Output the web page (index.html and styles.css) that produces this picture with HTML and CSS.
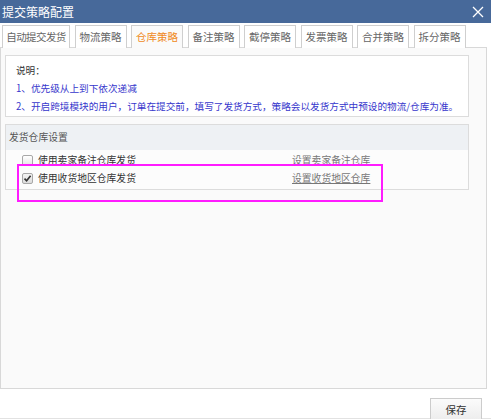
FILE: index.html
```html
<!DOCTYPE html>
<html lang="zh-CN">
<head>
<meta charset="utf-8">
<link rel="stylesheet" href="styles.css">
</head>
<body>
<div class="win">
  <div class="titlebar">
    <span class="title">提交策略配置</span>
    <svg class="close" width="12" height="12" viewBox="0 0 12 12"><path d="M1 1L11 11M11 1L1 11" stroke="#fff" stroke-width="1.3" fill="none"/></svg>
  </div>
  <div class="tabs">
    <div class="tab wide">自动提交发货</div>
    <div class="tab">物流策略</div>
    <div class="tab active">仓库策略</div>
    <div class="tab">备注策略</div>
    <div class="tab">截停策略</div>
    <div class="tab">发票策略</div>
    <div class="tab">合并策略</div>
    <div class="tab">拆分策略</div>
  </div>
  <div class="panel">
    <div class="note">
      <div class="note-title">说明：</div>
      <div class="note-line">1、优先级从上到下依次递减</div>
      <div class="note-line">2、开启跨境模块的用户，订单在提交前，填写了发货方式，策略会以发货方式中预设的物流/仓库为准。</div>
    </div>
    <div class="section">
      <div class="section-head">发货仓库设置</div>
      <div class="rows">
        <div class="row">
          <span class="opt"><span class="cb"></span>使用卖家备注仓库发货</span>
          <a class="link">设置卖家备注仓库</a>
        </div>
        <div class="row">
          <span class="opt"><span class="cb checked"><svg width="9" height="9" viewBox="0 0 9 9"><path d="M1.5 4.6L3.6 6.8L7.6 1.8" stroke="#333" stroke-width="1.6" fill="none"/></svg></span>使用收货地区仓库发货</span>
          <a class="link">设置收货地区仓库</a>
        </div>
      </div>
    </div>
  </div>
  <div class="footer">
    <button class="btn">保存</button>
  </div>
  <div class="highlight"></div>
</div>
</body>
</html>
```

FILE: styles.css
```css
html, body {
  margin: 0;
  padding: 0;
  background: #ffffff;
}
body {
  font-family: "Noto Sans CJK SC", "Liberation Sans", sans-serif;
  font-size: 10px;
  color: #333;
}
.win {
  position: relative;
  width: 491px;
  height: 419px;
  overflow: hidden;
  background: #ffffff;
}
.titlebar {
  height: 23px;
  background: #47699a;
  color: #fff;
  display: flex;
  align-items: center;
  justify-content: space-between;
  padding: 0 7px 0 2px;
}
.title {
  font-size: 12px;
  line-height: 23px;
}
.tabs {
  display: flex;
  gap: 4.5px;
  height: 22px;
  padding: 2px 0 0 2px;
  background: #ffffff;
  position: relative;
  z-index: 1;
}
.tab {
  box-sizing: border-box;
  width: 52px;
  height: 23px;
  border: 1px solid #cfcfcf;
  border-bottom: none;
  background: #ffffff;
  color: #666;
  font-size: 10.5px;
  line-height: 21px;
  text-align: center;
  white-space: nowrap;
}
.tab.wide {
  width: 68px;
  letter-spacing: -0.6px;
}
.tab.active {
  color: #f08a1c;
  background: #fafafa;
}
.panel {
  box-sizing: border-box;
  width: 487px;
  height: 342px;
  margin-left: 0;
  border: 1px solid #d8d8d8;
  background: #fafafa;
  padding: 7px 17px 0 4px;
}
.note {
  box-sizing: border-box;
  height: 62px;
  border: 1px solid #dcdcdc;
  background: #ffffff;
  padding: 5px 0 0 10px;
}
.note-title, .note-line {
  line-height: 18px;
  height: 18px;
  font-size: 9.65px;
  white-space: nowrap;
}
.note-title {
  color: #333;
}
.note-line {
  color: #3636cc;
}
.section {
  box-sizing: border-box;
  margin-top: 7px;
  height: 66px;
  border: 1px solid #dcdcdc;
  background: #fcfcfc;
}
.section-head {
  height: 25px;
  line-height: 25px;
  background: #eef1f4;
  padding-left: 3px;
  color: #555;
  font-size: 9.8px;
}
.rows {
  padding-top: 1px;
}
.row {
  display: grid;
  grid-template-columns: 270px auto;
  height: 18px;
  line-height: 18px;
  padding-left: 16px;
  font-size: 9.8px;
  color: #333;
}
.opt {
  display: flex;
  align-items: center;
}
.cb {
  box-sizing: border-box;
  display: inline-flex;
  align-items: center;
  justify-content: center;
  width: 11px;
  height: 11px;
  border: 1px solid #a8a8a8;
  border-radius: 2px;
  background: linear-gradient(#ffffff, #e6e6e6);
  margin-right: 5px;
}
.cb.checked {
  background: linear-gradient(#f4f4f4, #dcdcdc);
}
.link {
  color: #777;
  text-decoration: underline;
}
.footer {
  box-sizing: border-box;
  height: 30px;
  display: flex;
  justify-content: flex-end;
  padding: 9px 9px 0 0;
  border-bottom: 1px solid #e2e2e2;
}
.btn {
  box-sizing: border-box;
  width: 52px;
  height: 24px;
  border: 1px solid #cccccc;
  border-radius: 0;
  background: linear-gradient(#fbfbfb, #ececec);
  font-family: "Noto Sans CJK SC", sans-serif;
  font-size: 10.5px;
  color: #333;
  padding: 0;
  line-height: 20px;
}
.highlight {
  position: absolute;
  left: 17px;
  top: 164px;
  width: 366px;
  height: 38px;
  box-sizing: border-box;
  border: 2px solid #ff1cff;
}
```
